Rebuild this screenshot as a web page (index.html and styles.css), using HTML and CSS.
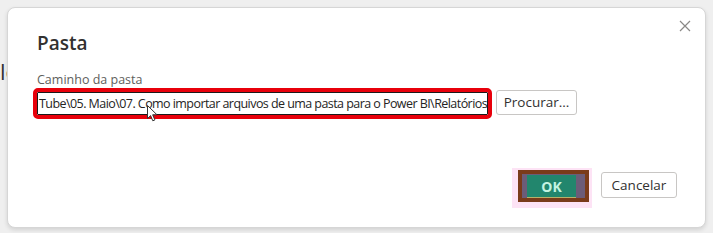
FILE: index.html
```html
<!DOCTYPE html>
<html lang="pt">
<head>
<meta charset="utf-8">
<title>Pasta</title>
<link rel="stylesheet" href="styles.css">
</head>
<body>
<div class="backdrop">
  <span class="behind">le</span>
</div>
<div class="dialog">
  <button class="close" aria-label="Fechar">
    <svg width="12" height="12" viewBox="0 0 12 12"><path d="M1 1L11 11M11 1L1 11" stroke="#8a8886" stroke-width="1.2" fill="none"/></svg>
  </button>
  <h1 class="title">Pasta</h1>
  <label class="label">Caminho da pasta</label>
  <div class="row">
    <div class="input">Tube\05. Maio\07. Como importar arquivos de uma pasta para o Power BI\Relatórios</div>
    <button class="btn browse">Procurar...</button>
  </div>
  <div class="footer">
    <span class="glow"><button class="ok"><span class="ok-inner">OK</span></button></span>
    <button class="btn cancel">Cancelar</button>
  </div>
</div>
<svg class="cursor" width="12" height="18" viewBox="0 0 12 18"><path d="M0.5 0.5L0.5 13.5L3.6 10.6L5.8 15.8L7.9 14.9L5.7 9.8L10 9.8Z" fill="#fff" stroke="#333" stroke-width="1" stroke-linejoin="round"/></svg>
</body>
</html>
```
FILE: styles.css
```css
html, body {
  margin: 0;
  padding: 0;
}
body {
  width: 713px;
  height: 233px;
  background: #efefef;
  font-family: "Open Sans", "Noto Sans", sans-serif;
  overflow: hidden;
  position: relative;
}
.backdrop {
  padding: 56px 0 0 0;
}
.behind {
  font-size: 22px;
  color: #333;
  margin-left: 0;
}
.dialog {
  position: absolute;
  left: 7px;
  top: 7px;
  width: 699px;
  height: 221px;
  background: #fff;
  border: 1px solid #d6d6d6;
  border-radius: 8px;
  box-shadow: 0 2px 4px rgba(0,0,0,0.12);
  padding: 0 0 0 29px;
  box-sizing: border-box;
  display: flex;
  flex-direction: column;
}
.close {
  position: absolute;
  right: 10px;
  top: 8px;
  width: 20px;
  height: 20px;
  padding: 0;
  border: 0;
  background: transparent;
  display: flex;
  align-items: center;
  justify-content: center;
}
.title {
  margin: 22px 0 0 0;
  font-size: 19px;
  line-height: 26px;
  font-weight: 600;
  color: #323130;
}
.label {
  margin-top: 16px;
  font-size: 12.5px;
  line-height: 16px;
  color: #605e5c;
}
.row {
  display: flex;
  align-items: center;
  margin-top: 4px;
  gap: 8px;
}
.input {
  width: 451px;
  height: 23px;
  box-sizing: border-box;
  border: 1px solid #1a1a1a;
  outline: 4px solid #e8000b;
  border-radius: 1px;
  font-size: 12.5px;
  line-height: 21px;
  color: #252423;
  padding-left: 1px;
  white-space: nowrap;
  overflow: hidden;
  letter-spacing: -0.56px;
}
.btn {
  font-family: "Open Sans", "Noto Sans", sans-serif;
  background: #fff;
  border: 1px solid #c8c6c4;
  border-radius: 3px;
  color: #323130;
  font-size: 13.5px;
  padding: 0;
  box-sizing: border-box;
}
.browse {
  width: 81px;
  height: 25px;
  margin-top: -3px;
}
.footer {
  display: flex;
  align-items: flex-start;
  justify-content: flex-end;
  margin-top: 57px;
  padding-right: 28px;
}
.glow {
  display: block;
  background: #fde3f5;
  padding: 2px 3px 6px 6px;
  margin-top: -4px;
}
.ok {
  display: block;
  width: 71px;
  height: 32px;
  box-sizing: border-box;
  border: 4px solid #7a3b1a;
  background: #6c5c78;
  padding: 1px 9px 1px 5px;
  margin: 0;
}
.ok-inner {
  display: flex;
  align-items: center;
  justify-content: center;
  height: 22px;
  background: #22866d;
  border-bottom: 1px solid #b7b16a;
  color: #c4f4e2;
  font-weight: 700;
  font-size: 14px;
  font-family: "Open Sans", "Noto Sans", sans-serif;
}
.cancel {
  width: 76px;
  height: 26px;
  margin-left: 9px;
}
.cursor {
  position: absolute;
  left: 147px;
  top: 105px;
}
```
